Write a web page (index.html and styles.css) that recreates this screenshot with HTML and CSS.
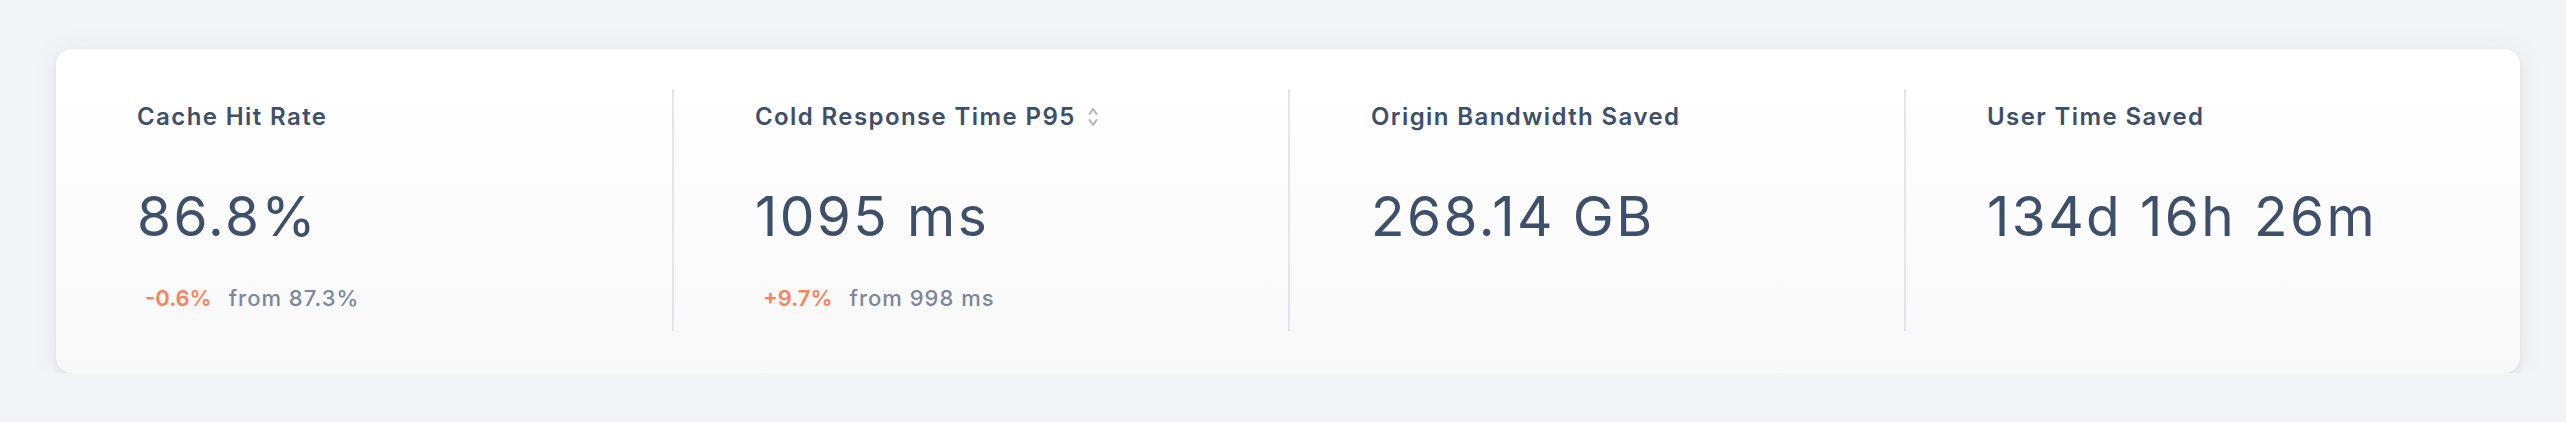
FILE: index.html
```html
<!DOCTYPE html>
<html lang="en">
<head>
<meta charset="utf-8">
<title>Cache Stats</title>
<link rel="stylesheet" href="styles.css">
</head>
<body>
<main class="wrap">
  <section class="card">
    <div class="stat">
      <div class="title">Cache Hit Rate</div>
      <div class="value">86.8%</div>
      <div class="delta"><span class="change">-0.6%</span><span class="from">from 87.3%</span></div>
    </div>
    <div class="stat">
      <div class="title">Cold Response Time P95
        <svg class="sort" width="10" height="22" viewBox="0 0 10 22" aria-hidden="true">
          <path d="M1.5 8 L5 3 L8.5 8" />
          <path d="M1.5 14 L5 19 L8.5 14" />
        </svg>
      </div>
      <div class="value">1095 ms</div>
      <div class="delta"><span class="change">+9.7%</span><span class="from">from 998 ms</span></div>
    </div>
    <div class="stat">
      <div class="title">Origin Bandwidth Saved</div>
      <div class="value">268.14 GB</div>
    </div>
    <div class="stat">
      <div class="title">User Time Saved</div>
      <div class="value">134d 16h 26m</div>
    </div>
  </section>
</main>
</body>
</html>
```

FILE: styles.css
```css
* { box-sizing: border-box; }

html, body {
  margin: 0;
  background: #f3f4f7;
  font-family: Inter, "Open Sans", sans-serif;
}

.wrap {
  padding: 49px 46px 0 56px;
}

.card {
  display: grid;
  grid-template-columns: repeat(4, 1fr);
  padding: 40px 0 42px;
  border-radius: 16px;
  background: linear-gradient(180deg, #ffffff 12%, #f8f8f9 100%);
  box-shadow: 0 4px 9px rgba(40, 55, 80, 0.08), 0 0 30px rgba(40, 55, 80, 0.05);
}

.stat {
  height: 242px;
  padding: 10px 0 0 81px;
  display: flex;
  flex-direction: column;
  align-items: flex-start;
}

.stat + .stat {
  border-left: 2px solid #e2e6ec;
  padding-left: 81px;
}

.title {
  display: flex;
  align-items: center;
  gap: 12px;
  font-size: 24px;
  line-height: 36px;
  font-weight: 600;
  color: #3e4f6c;
  letter-spacing: 1.4px;
}

.sort path {
  fill: none;
  stroke: #aab4c5;
  stroke-width: 2;
  stroke-linecap: round;
  stroke-linejoin: round;
}

.value {
  margin-top: 54px;
  font-size: 55px;
  line-height: 55px;
  font-weight: 400;
  color: #3e4f6c;
  letter-spacing: 2.4px;
}

.delta {
  margin-top: 38px;
  padding-left: 8px;
  display: flex;
  gap: 17px;
  font-size: 22px;
  line-height: 33px;
}

.change {
  color: #f7845f;
  font-weight: 600;
}

.from {
  color: #7c879b;
  font-weight: 500;
  letter-spacing: 1px;
}
```
